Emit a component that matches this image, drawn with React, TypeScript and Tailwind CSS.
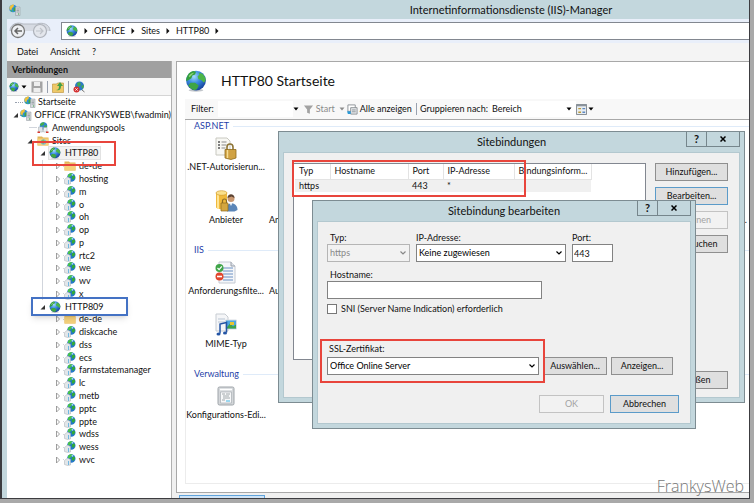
import React, { useState } from "react";
import clsx from "clsx";

type IconProps = { className?: string };

function Globe({ className = "size-3" }: IconProps) {
  return (
    <svg viewBox="0 0 24 24" className={clsx("shrink-0", className)} aria-hidden="true">
      <defs>
        <radialGradient id="sea" cx="40%" cy="30%" r="75%">
          <stop offset="0" stopColor="#a5ddfa" />
          <stop offset="0.45" stopColor="#3a8be0" />
          <stop offset="1" stopColor="#123a94" />
        </radialGradient>
      </defs>
      <ellipse cx="12" cy="22" rx="8" ry="1.6" fill="#9aa0a8" opacity="0.6" />
      <circle cx="12" cy="11.5" r="10.8" fill="url(#sea)" />
      <path d="M2 8C3 4 6 1.800 9 1l3 1-1 3-3 1-1 3-3 2-2.500 1C1 10.500 1.300 9.500 2 8Z" fill="#35a03c" />
      <path d="M15 3l4 1c2 2 3.500 4.500 3.700 7l-2 3-3-3-3-1-1-3 2-2Z" fill="#4cb648" />
      <path d="M6 14l5 0 4 3-2 4-3 1c-3-1-5.500-3-6.500-5Z" fill="#3fa543" />
      <path d="M4 6.500c2-2.500 4-3.500 6-3.500L8 5 5 8Z" fill="#a5e08b" opacity="0.8" />
    </svg>
  );
}

function ServerGlobe({ className = "size-3" }: IconProps) {
  return (
    <svg viewBox="0 0 24 24" className={clsx("shrink-0", className)} aria-hidden="true">
      <circle cx="8" cy="9" r="7.500" fill="#2c8fe0" />
      <path d="M1 6c2-4 6-5 9-5l-1 5-3 2-1 4-4-1Z" fill="#f0c23a" />
      <path d="M9 8l4-2 2 2-2 6-4 1Z" fill="#3da843" />
      <path d="M3 12l3 1 1 3c-2 0-4-2-4-4Z" fill="#4fb850" />
      <path d="M13 6h9v17h-9Z" fill="#d5d9dc" stroke="#8d959b" />
      <path d="M15 10h5M15 13h5M15 16h5" stroke="#7c858c" strokeWidth="1.2" />
      <path d="M18 19h2v2h-2Z" fill="#38a845" />
    </svg>
  );
}

function AppIcon({ className = "size-3" }: IconProps) {
  return (
    <svg viewBox="0 0 24 24" className={clsx("shrink-0", className)} aria-hidden="true">
      <circle cx="14.500" cy="9" r="8.500" fill="#2476cc" />
      <path d="M8 4c2-3 6-4 9-3l-2 4-3 3-4 1Z" fill="#48c348" />
      <path d="M17 5l5 1v4l-4 4-3-4Z" fill="#31a93a" />
      <path d="M15 2l3 0 1 2-3 2Z" fill="#9fd8fa" />
      <path d="M1 13l6-5 6 3v11l-6 1-6-2Z" fill="#e2e6e9" stroke="#a4acb2" />
      <path d="M9 14v8" stroke="#4aa8e0" strokeWidth="1.5" />
    </svg>
  );
}

function PoolIcon({ className = "size-3" }: IconProps) {
  return (
    <svg viewBox="0 0 24 24" className={clsx("shrink-0", className)} aria-hidden="true">
      <circle cx="13" cy="8" r="7.500" fill="#2f86d2" />
      <path d="M6 5c2-3 6-5 9-4l-2 5-5 2Z" fill="#45ad49" />
      <path d="M14 8l5-2 1 4-4 2Z" fill="#45ad49" />
      <path d="M3 10h8v10H3Z" fill="#dfe3e6" stroke="#a2abb1" />
      <path d="M13 11h7v9h-7Z" fill="#eceff1" stroke="#a2abb1" />
      <path d="M1 19h5v3H1ZM18 19h5v3h-5Z" fill="#d8362d" />
    </svg>
  );
}

function Folder({ className = "size-3", globe }: IconProps & { globe?: boolean }) {
  return (
    <svg viewBox="0 0 24 24" className={clsx("shrink-0", className)} aria-hidden="true">
      <path d="M1 3h9l2 2h11v16H1Z" fill="#e3b558" />
      <path d="M1 7h22v14H1Z" fill="#f5d27c" />
      {globe && <circle cx="13" cy="14" r="5.500" fill="#7fb8cf" />}
      {globe && <path d="M9 11l4-2 2 3-2 6-4-2Z" fill="#7fb95c" />}
    </svg>
  );
}

const sites = [
  {
    name: "HTTP80",
    selected: true,
    apps: ["de-de", "hosting", "m", "o", "oh", "op", "p", "rtc2", "we", "wv", "x"],
  },
  {
    name: "HTTP809",
    selected: false,
    apps: [
      "de-de", "diskcache", "dss", "ecs", "farmstatemanager", "lc",
      "metb", "pptc", "ppte", "wdss", "wess", "wvc",
    ],
  },
];

function Arrow({ open }: { open?: boolean }) {
  return (
    <svg viewBox="0 0 8 8" className="size-2 shrink-0" aria-hidden="true">
      {open ? (
        <path d="M6 2v4.500h-4.500Z" fill="#333" />
      ) : (
        <path d="M1.500 1l3 3-3 3Z" fill="#fff" stroke="#888" strokeWidth="0.8" />
      )}
    </svg>
  );
}

function Row({ children, className }: { children: React.ReactNode; className?: string }) {
  return (
    <li className={clsx("flex min-h-0 flex-1 items-center whitespace-nowrap", className)}>
      {children}
    </li>
  );
}

function Tree() {
  return (
    <ul className="flex h-[370px] flex-col">
      <Row className="pl-2">
        <span className="mr-px w-2 border-t border-dotted border-gray-400" />
        <ServerGlobe />
        <span className="ml-0.5">Startseite</span>
      </Row>
      <Row className="pl-[5px]">
        <span className="flex w-2"><Arrow open /></span>
        <span className="w-[3px] border-t border-dotted border-gray-400" />
        <ServerGlobe />
        <span className="ml-0.5">OFFICE (FRANKYSWEB\fwadmin)</span>
      </Row>
      <Row className="pl-[22px]">
        <span className="w-2 border-t border-gray-300" />
        <PoolIcon />
        <span className="ml-[3px]">Anwendungspools</span>
      </Row>
      <Row className="pl-[19px]">
        <Arrow open />
        <Folder globe className="ml-[3px] size-3" />
        <span className="ml-[3px]">Sites</span>
      </Row>
      {sites.map((site) => (
        <React.Fragment key={site.name}>
          <Row className="pl-8">
            <Arrow open />
            <span className="w-0.5" />
            <span className={clsx("flex items-center pr-0.5", site.selected && "bg-[#f2f2f2] outline outline-[#e2e2e2]")}>
              <Globe />
              <span className="ml-1 leading-[12px]">{site.name}</span>
            </span>
          </Row>
          {site.apps.map((app) => (
            <Row
              key={app}
              className={clsx("ml-[35px] border-l pl-3", site.selected ? "border-gray-300" : "border-transparent")}
            >
              <Arrow />
              <span className="w-px border-t border-gray-300" />
              {app === "de-de" ? <Folder /> : <AppIcon />}
              <span className="ml-[3px]">{app}</span>
            </Row>
          ))}
        </React.Fragment>
      ))}
    </ul>
  );
}

function LockPage() {
  return (
    <svg viewBox="0 0 24 24" className="size-6" aria-hidden="true">
      <path d="M2 2h11l3 3v14H2Z" fill="#f8f8f4" stroke="#c8c8c0" />
      <path d="M4 6h2M4 9h2M4 12h2" stroke="#555" strokeWidth="1.4" />
      <path d="M7.500 6h5M7.500 9h5M7.500 12h4" stroke="#8a8a8a" />
      <path d="M13 14v-3a3 3 0 0 1 6 0v3" fill="none" stroke="#8d7436" strokeWidth="1.6" />
      <path d="M11 13.500h11V22l-5 1.500-6-1.500Z" fill="#d0a244" stroke="#8f6b1c" strokeWidth="0.8" />
      <path d="M13.500 14v8" stroke="#f6dd95" strokeWidth="1.4" />
    </svg>
  );
}

function ProviderIcon() {
  return (
    <svg viewBox="0 0 24 24" className="size-6" aria-hidden="true">
      <path d="M2 4v14c0 3 11 3 11 0V4Z" fill="#f0b93c" />
      <path d="M4 5v15" stroke="#ffe493" strokeWidth="2" />
      <ellipse cx="7.500" cy="4" rx="5.500" ry="2.300" fill="#fae08d" stroke="#c98f1f" strokeWidth="0.6" />
      <circle cx="17" cy="9.500" r="3.500" fill="#c99871" />
      <path d="M13.500 9c0-5 7-5 7 0l-3-1.500Z" fill="#5b4332" />
      <path d="M11.500 21c0-9 12-9 12 0l-3 1.500h-7Z" fill="#5b86b8" />
      <path d="M15.500 14l1.500 3 1.500-3Z" fill="#eef3f8" />
      <path d="M8.500 14v-2a2 2 0 0 1 4 0v2" fill="none" stroke="#8a6c26" strokeWidth="1.200" />
      <path d="M7 14h7v8H7Z" fill="#d4a640" stroke="#8f6b1c" strokeWidth="0.700" />
    </svg>
  );
}

function FilterIcon() {
  return (
    <svg viewBox="0 0 24 24" className="size-6" aria-hidden="true">
      <path d="M5 2h12l4 4v17H5Z" fill="#f4f6f9" stroke="#c5cad2" />
      <path d="M17 2v4h4" fill="#dfe3e9" stroke="#9aa0aa" />
      <path d="M9 8h10M9 11h10M9 14h10M9 17h10M9 20h10" stroke="#6b8fc4" strokeWidth="1.200" />
      <circle cx="5.500" cy="8" r="4" fill="#3fa548" />
      <path d="M3.500 8l1.600 1.700 2.700-3.400" fill="none" stroke="#fff" strokeWidth="1.200" />
      <circle cx="5.500" cy="16.500" r="4" fill="#e0462d" />
      <path d="M3 16.500h5" stroke="#fff" strokeWidth="1.600" />
    </svg>
  );
}

function MimeIcon() {
  return (
    <svg viewBox="0 0 24 24" className="size-6" aria-hidden="true">
      <path d="M2 1h9l3 3v14H2Z" fill="#f5f6f8" stroke="#c7ccd2" />
      <path d="M4 6h7M4 9h7" stroke="#b9c5d3" />
      <path d="M11.500 7h11v9h-11Z" fill="#4fa6e0" stroke="#d8dde2" />
      <path d="M12 15.500l4-5 3 3 3-2v4Z" fill="#3fa447" />
      <path d="M16 9h4v3h-4Z" fill="#e9c531" />
      <path d="M6 20.500V11l6.500-1.500v10" fill="none" stroke="#2455a5" strokeWidth="1.500" />
      <ellipse cx="4.500" cy="21" rx="2" ry="1.500" fill="#2455a5" />
      <ellipse cx="11" cy="20" rx="2" ry="1.500" fill="#2455a5" />
    </svg>
  );
}

function ConfigIcon() {
  return (
    <svg viewBox="0 0 24 24" className="size-6" aria-hidden="true">
      <rect x="4" y="3" width="16" height="18" rx="1.500" fill="#d4d7da" stroke="#9ea4a9" />
      <path d="M6 5.500h12" stroke="#fff" strokeWidth="1.500" />
      <path d="M6.500 8h11v11h-11Z" fill="#f7f8f9" stroke="#a9afb4" strokeWidth="0.700" />
      <path d="M8 10h3M12 10h4M9 12h6M9 14h7M8 16h3" stroke="#8d959b" strokeWidth="0.800" />
      <path d="M12 17h4" stroke="#41b6e6" />
    </svg>
  );
}

function Feature({ icon, label }: { icon: React.ReactNode; label: string }) {
  return (
    <div className="flex w-20 shrink-0 flex-col items-center gap-px whitespace-nowrap">
      <span className="h-6">{icon}</span>
      <span className="h-3 leading-[12px]">{label}</span>
    </div>
  );
}

function Group({ title, children }: { title: string; children: React.ReactNode }) {
  return (
    <section>
      <h2 className="flex h-3 items-center gap-1 pl-2 leading-[12px] text-[#1f3fa8] after:h-px after:flex-1 after:bg-[#dfebf9]">
        {title}
      </h2>
      <div className="flex flex-col gap-4 pt-1">{children}</div>
    </section>
  );
}

function Separator() {
  return <span className="h-3 w-px bg-gray-400" />;
}

function Caret({ className = "text-black" }: IconProps) {
  return (
    <svg viewBox="0 0 6 4" className={clsx("h-1 w-1.5 shrink-0", className)} aria-hidden="true">
      <path d="M0.500 0.500h5L3 3.500Z" fill="currentColor" />
    </svg>
  );
}

function Crumb({ label }: { label: string }) {
  return (
    <>
      <svg viewBox="0 0 4 6" className="h-1.5 w-1" aria-hidden="true">
        <path d="M0.500 0v6l3-3Z" fill="#111" />
      </svg>
      {label && <a href="#" className="leading-[12px]">{label}</a>}
    </>
  );
}

function Btn({
  children,
  className,
  kind = "normal",
}: {
  children: React.ReactNode;
  className?: string;
  kind?: "normal" | "focus" | "disabled";
}) {
  return (
    <button
      type="button"
      disabled={kind === "disabled"}
      className={clsx(
        "h-[18px] border text-center leading-[14px] whitespace-nowrap",
        kind === "normal" && "border-[#8f8f8f] bg-[#dfdfdf]",
        kind === "focus" && "border-[#5b9bc9] bg-[#dfdfdf]",
        kind === "disabled" && "border-[#c3c3c3] bg-[#f2f2f2] text-[#a3a3a3]",
        className
      )}
    >
      {children}
    </button>
  );
}

function DialogTitle({ title }: { title: string }) {
  return (
    <header className="relative flex h-5 items-center justify-center">
      <h2 className="text-[11px] leading-[16px]">{title}</h2>
      <div className="absolute top-0 right-0 flex h-[15px] border border-t-0 border-[#76868c] font-bold">
        <button type="button" className="w-5 border-r border-[#76868c] text-[11px] leading-[12px]" aria-label="Hilfe">
          ?
        </button>
        <button type="button" className="flex w-8 items-center justify-center" aria-label="Schließen">
          <svg viewBox="0 0 6 6" className="size-1.5">
            <path d="M0.500 0.500l5 5M5.500 0.500l-5 5" stroke="#000" strokeWidth="1.500" />
          </svg>
        </button>
      </div>
    </header>
  );
}

function Dropdown({ id, value, disabled, className }: { id: string; value: string; disabled?: boolean; className?: string }) {
  return (
    <div className={clsx("relative h-[18px]", className, disabled ? "text-[#888]" : "text-black")}>
      <select
        id={id}
        disabled={disabled}
        className={clsx(
          "size-full appearance-none border pl-0.5 leading-[14px] opacity-100 outline-none",
          disabled ? "border-[#b5b5b5] bg-[#f2f2f2]" : "border-[#828282] bg-white"
        )}
      >
        <option>{value}</option>
      </select>
      <svg viewBox="0 0 6 4" className="pointer-events-none absolute top-[7px] right-1 h-1 w-1.5" aria-hidden="true">
        <path d="M0.500 0.500L3 3L5.500 0.500" fill="none" stroke="currentColor" strokeWidth="1.200" />
      </svg>
    </div>
  );
}

function BindingsDialog() {
  return (
    <div
      role="dialog"
      aria-label="Sitebindungen"
      className="absolute top-[131px] left-[278px] w-[467px] border border-[#7d8c92] bg-[#c3d7dd] px-1 pb-1"
    >
      <DialogTitle title="Sitebindungen" />
      <div className="flex h-[246px] justify-between border border-[#b3c8cf] bg-[#f0f0f0] pt-[10px] pr-[11px] pb-2 pl-[9px]">
        <div className="h-[197px] w-[353px] border border-[#828790] bg-white pl-px">
          <table className="w-[296px] table-fixed border-collapse text-left">
            <thead>
              <tr className="h-[15px] [&>th]:border-r [&>th]:border-b [&>th]:border-[#e3e3e3] [&>th]:py-0 [&>th]:pr-0 [&>th]:pl-1 [&>th]:font-normal">
                <th className="w-[35px]">Typ</th>
                <th className="w-[78px]">Hostname</th>
                <th className="w-[35px]">Port</th>
                <th className="w-[71px]">IP-Adresse</th>
                <th className="w-[77px] whitespace-nowrap">Bindungsinform...</th>
              </tr>
            </thead>
            <tbody>
              <tr className="h-[13px] bg-[#f0f0f0] leading-[12px] [&>td]:py-0 [&>td]:pl-1">
                <td>https</td>
                <td></td>
                <td>443</td>
                <td>*</td>
                <td></td>
              </tr>
            </tbody>
          </table>
        </div>
        <div className="flex w-[73px] flex-col gap-1.5">
          <Btn>Hinzufügen...</Btn>
          <Btn kind="focus">Bearbeiten...</Btn>
          <Btn kind="disabled">Entfernen</Btn>
          <Btn>Durchsuchen</Btn>
          <Btn className="mt-auto">Schließen</Btn>
        </div>
      </div>
    </div>
  );
}

function EditBindingDialog() {
  const [host, setHost] = useState("");
  const [port, setPort] = useState("443");
  const [sni, setSni] = useState(false);

  return (
    <div
      role="dialog"
      aria-label="Sitebindung bearbeiten"
      className="absolute top-[200px] left-[312px] w-[384px] border border-[#7d8c92] bg-[#c3d7dd] px-1 pb-1"
    >
      <DialogTitle title="Sitebindung bearbeiten" />
      <div className="border border-[#b3c8cf] bg-[#f0f0f0] pt-[10px] pb-[10px] pl-[9px]">
        <div className="flex gap-1.5">
          <div className="w-[83px]">
            <label htmlFor="type" className="block h-3 pl-[3px] leading-[12px]">Typ:</label>
            <Dropdown id="type" value="https" disabled />
          </div>
          <div className="w-[150px]">
            <label htmlFor="ip" className="block h-3 leading-[12px]">IP-Adresse:</label>
            <Dropdown id="ip" value="Keine zugewiesen" />
          </div>
          <div className="w-[41px]">
            <label htmlFor="port" className="block h-3 leading-[12px]">Port:</label>
            <input
              id="port"
              value={port}
              onChange={(e) => setPort(e.target.value)}
              className="block h-[18px] w-full border border-[#828282] bg-white pl-px"
            />
          </div>
        </div>
        <label htmlFor="host" className="mt-[7px] block h-3 pl-[3px] leading-[12px]">Hostname:</label>
        <input
          id="host"
          value={host}
          onChange={(e) => setHost(e.target.value)}
          className="block h-[18px] w-[215px] border border-[#828282] bg-white px-1"
        />
        <div className="mt-1 flex h-3 items-center gap-1">
          <input
            id="sni"
            type="checkbox"
            checked={sni}
            onChange={(e) => setSni(e.target.checked)}
            className="size-2.5 appearance-none border border-[#777] bg-white checked:bg-gray-600"
          />
          <label htmlFor="sni">SNI (Server Name Indication) erforderlich</label>
        </div>
        <label htmlFor="cert" className="mt-7 block h-3 pl-0.5 leading-[12px]">SSL-Zertifikat:</label>
        <div className="mt-0.5 flex gap-1">
          <Dropdown id="cert" value="Office Online Server" className="w-[212px]" />
          <Btn className="w-[64px]">Auswählen...</Btn>
          <Btn className="w-[62px]">Anzeigen...</Btn>
        </div>
        <div className="mt-5 mr-[11px] flex justify-end gap-1.5">
          <Btn kind="disabled" className="w-[65px]">OK</Btn>
          <Btn kind="focus" className="w-[69px]">Abbrechen</Btn>
        </div>
      </div>
    </div>
  );
}

export default function App() {
  return (
    <div className="relative flex min-h-screen flex-col overflow-hidden bg-[#a9a9a9] pr-1 pb-1 font-['Lato','Open_Sans',sans-serif] text-[9px] leading-[12px] text-[#111]">
      <div className="flex flex-1 flex-col border-r border-b border-l-2 border-[#3c3c40] bg-[#c3d7dd] pl-[5px]">
        <header className="flex h-[19px] items-center pl-0.5">
          <ServerGlobe />
          <h1 className="flex-1 pl-[252px] text-center text-[11px] leading-[16px]">
            Internetinformationsdienste (IIS)-Manager
          </h1>
        </header>

        <div className="flex h-6 items-center bg-[#e9effa] pl-0.5">
          <svg viewBox="0 0 42 20" className="h-5 w-[42px]">
            <path d="M1 10C1 2 10 1 14 3h14c5-2 13 0 13 7" fill="#d6dae2" stroke="#b4b9c2" />
            <circle cx="9" cy="10" r="6.500" fill="#eef0f3" stroke="#777" strokeWidth="1.300" />
            <path d="M13 10H6M9 7l-3 3 3 3" fill="none" stroke="#666" strokeWidth="1.500" />
            <circle cx="31" cy="10" r="6.500" fill="#e3e6ec" stroke="#aeb2ba" strokeWidth="1.200" />
            <path d="M27 10h7M31 7l3 3-3 3" fill="none" stroke="#bfc3ca" strokeWidth="1.200" />
          </svg>
          <nav className="ml-2.5 flex h-[18px] flex-1 items-center gap-1.5 border border-r-0 border-[#828790] bg-white pl-1">
            <Globe />
            <Crumb label="OFFICE" />
            <Crumb label="Sites" />
            <Crumb label="HTTP80" />
            <Crumb label="" />
          </nav>
        </div>

        <div className="flex h-[18px] items-center gap-3 bg-[#f4f4f4] pl-2.5">
          <button type="button">Datei</button>
          <button type="button">Ansicht</button>
          <button type="button">?</button>
        </div>

        <div className="flex flex-1 bg-[#f0f0f0]">
          <aside className="w-[165px] shrink-0 border-r border-[#b0b0b0] bg-white">
            <h2 className="flex h-[17px] items-center bg-[#a0a0a0] pl-[5px] font-bold">Verbindungen</h2>
            <div className="flex h-[18px] items-center gap-1 border-b border-[#d5d5d5] bg-[#f6f6f6] pl-0.5">
              <Globe className="size-2.5" />
              <span className="-ml-0.5 flex"><Caret /></span>
              <svg viewBox="0 0 12 12" className="size-3" aria-hidden="true">
                <path d="M0.500 0.500h11v11H0.500Z" fill="#a4a4a4" />
                <path d="M3 1h6v4H3ZM2.500 7h7v4h-7Z" fill="#eee" />
              </svg>
              <Separator />
              <svg viewBox="0 0 12 12" className="size-3" aria-hidden="true">
                <path d="M0.500 3h4l1-1h6v9.500H0.500Z" fill="#efc868" stroke="#b88e34" strokeWidth="0.600" />
                <path d="M4 9c2 0 3-1 3-4H5l3-4 3 4H9c0 4-2 5-5 4Z" fill="#43a047" />
              </svg>
              <Separator />
              <svg viewBox="0 0 12 12" className="size-3" aria-hidden="true">
                <circle cx="6.500" cy="5" r="4.500" fill="#2d7ac6" />
                <path d="M4 2l3-1 1 3-3 2ZM8 5l3-1-1 4Z" fill="#45ab48" />
                <circle cx="3.500" cy="8.500" r="3" fill="#d42f2f" />
                <path d="M2.300 7.300l2.400 2.400M4.700 7.300L2.300 9.700" stroke="#fff" strokeWidth="0.800" />
                <path d="M9 9l2.500 2" stroke="#777" />
              </svg>
            </div>
            <Tree />
          </aside>

          <div className="ml-1 flex min-w-0 flex-1 flex-col">
            <main className="flex flex-1 flex-col border-t border-b border-l border-[#a8a8a8] bg-white pb-2 pl-2">
              <div className="flex h-[37px] items-center gap-3.5">
                <Globe className="size-[22px]" />
                <h2 className="text-[14px] leading-[20px]">HTTP80 Startseite</h2>
              </div>
              <div className="flex h-[21px] items-center border-b border-[#a8a8a8] bg-[#f8f8f8] pl-1.5">
                <label htmlFor="filter">Filter:</label>
                <input id="filter" className="ml-1 h-4 w-[75px] bg-white" />
                <Caret />
                <svg viewBox="0 0 12 12" className="ml-1 size-[11px]" aria-hidden="true">
                  <path d="M1 1.500h10L7.500 6v4.500l-3-1V6Z" fill="#a2a2a2" />
                </svg>
                <button type="button" className="flex items-center gap-1 pl-0.5 text-[#8b8b8b]">
                  Start <Caret className="text-[#8b8b8b]" />
                </button>
                <svg viewBox="0 0 12 12" className="ml-0.5 size-[11px]" aria-hidden="true">
                  <path d="M1 1h8v7H1Z" fill="#fff" stroke="#8a8f94" />
                  <path d="M4 4h7v7H4Z" fill="#e7eaed" stroke="#8a8f94" />
                  <path d="M5.500 8.500h4M5.500 6.500h4" stroke="#8a8f94" />
                  <path d="M0 8h4v3H1Z" fill="#2b9ad6" />
                </svg>
                <button type="button" className="mr-1 pl-0.5">Alle anzeigen</button>
                <Separator />
                <label htmlFor="group" className="ml-[3px]">Gruppieren nach:</label>
                <div className="relative ml-0.5 flex h-4 w-[86px] items-center bg-white">
                  <select id="group" className="size-full appearance-none pl-0.5">
                    <option>Bereich</option>
                  </select>
                  <span className="pointer-events-none absolute inset-y-0 right-1 flex items-center"><Caret /></span>
                </div>
                <svg viewBox="0 0 12 12" className="size-[11px]" aria-hidden="true">
                  <path d="M0.500 0.500h11v11H0.500Z" fill="#e9edf1" stroke="#7b8289" />
                  <path d="M0.500 1.500h11" stroke="#8a939c" strokeWidth="2" />
                  <path d="M2.500 5h3M2.500 9h3" stroke="#bb9c3a" strokeWidth="1.500" />
                  <path d="M7 5h3M7 9h3" stroke="#5d88bf" strokeWidth="1.500" />
                </svg>
                <span className="ml-px flex"><Caret /></span>
              </div>
              <div className="flex-1 overflow-hidden border-b border-l border-[#ececec]">
                <Group title="ASP.NET">
                  <div className="flex">
                    <Feature icon={<LockPage />} label=".NET-Autorisierun..." />
                  </div>
                  <div className="flex items-end">
                    <Feature icon={<ProviderIcon />} label="Anbieter" />
                    <span className="pl-[3px]">Anwendung...</span>
                    <span className="mr-0.5 ml-auto">...</span>
                  </div>
                </Group>
                <div className="h-[18px]" />
                <Group title="IIS">
                  <div className="flex items-end">
                    <Feature icon={<FilterIcon />} label="Anforderungsfilte..." />
                    <span className="pl-[3px]">Ausgabe...</span>
                  </div>
                  <div className="flex">
                    <Feature icon={<MimeIcon />} label="MIME-Typ" />
                  </div>
                </Group>
                <div className="h-[18px]" />
                <Group title="Verwaltung">
                  <div className="flex">
                    <Feature icon={<ConfigIcon />} label="Konfigurations-Edi..." />
                  </div>
                </Group>
              </div>
            </main>
            <div className="flex h-[5px] items-end pl-[3px]">
              <span className="h-[3px] w-[86px] border border-b-0 border-[#5fa3dc] bg-[#cfe4f7]" />
            </div>
          </div>
        </div>
      </div>

      <BindingsDialog />
      <EditBindingDialog />

      {/* Highlight frames */}
      <div className="pointer-events-none absolute top-[141px] left-[32px] h-[25px] w-[84px] border-2 border-[#e8453c]" />
      <div className="pointer-events-none absolute top-[297px] left-[31px] h-[19px] w-[97px] border-2 border-[#4472c4] shadow-md" />
      <div className="pointer-events-none absolute top-[160px] left-[292px] h-[37px] w-[234px] border-2 border-[#e8453c]" />
      <div className="pointer-events-none absolute top-[339px] left-[320px] h-[44px] w-[225px] border-2 border-[#e8453c]" />

      <span className="absolute right-2.5 bottom-[7px] font-['Open_Sans',sans-serif] text-[16px] leading-[20px] font-light text-[#777]">
        FrankysWeb
      </span>
    </div>
  );
}
